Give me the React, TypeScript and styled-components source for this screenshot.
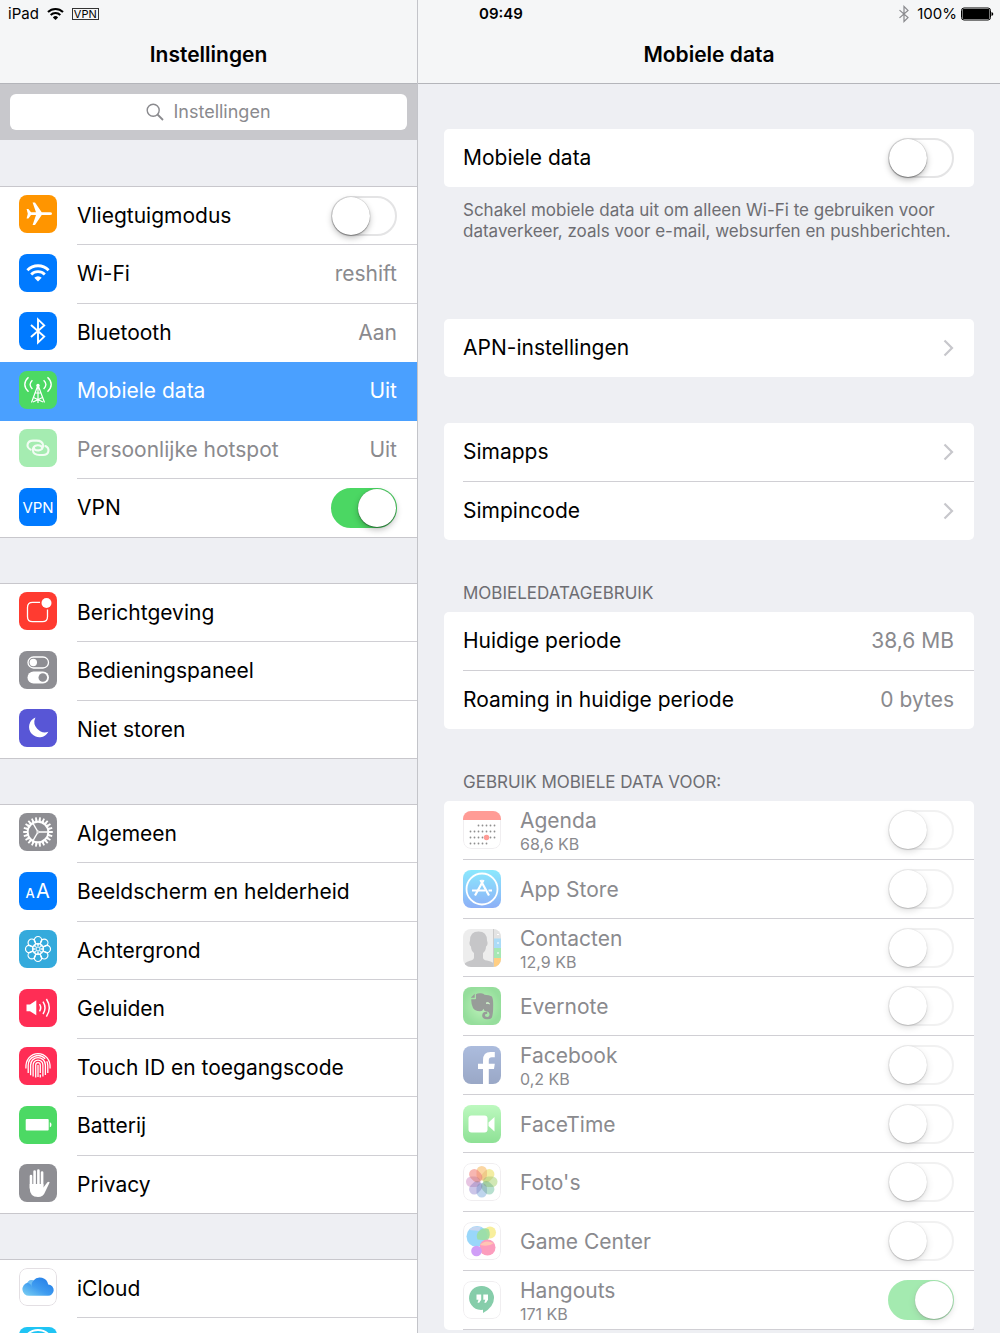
import React, { useState } from "react";
import styled, { createGlobalStyle, css } from "styled-components";

const GlobalStyle = createGlobalStyle`
  *, *::before, *::after { box-sizing: border-box; }
  body {
    margin: 0;
    background: #eeeff3;
    color: #000;
    font-family: Inter, "Liberation Sans", sans-serif;
    font-size: 21px;
    line-height: 26px;
  }
  h1, h2, p, ul { margin: 0; padding: 0; }
  ul { list-style: none; }
`;

/* ---------- layout ---------- */

const Screen = styled.div`
  display: grid;
  grid-template-columns: 418px minmax(0, 1fr);
  grid-template-rows: 28px minmax(0, 1fr);
  height: 100vh;
  overflow: hidden;
`;

const StatusBar = styled.header`
  grid-area: 1 / 1 / 2 / 3;
  z-index: 1;
  display: grid;
  grid-template-columns: 1fr auto 1fr;
  align-items: center;
  padding: 0 6px 0 8px;
  font-size: 15px;
  line-height: 20px;
`;

const StatusGroup = styled.div<{ $end?: boolean }>`
  display: flex;
  align-items: center;
  justify-content: ${(p) => (p.$end ? "flex-end" : "flex-start")};
  gap: ${(p) => (p.$end ? 4 : 8)}px;
`;

const Clock = styled.time`
  font-weight: 600;
`;

const VpnBadge = styled.span`
  border: 1px solid #333;
  padding: 0 1px;
  font-size: 11px;
  line-height: 10px;
`;

const Pane = styled.div`
  grid-row: 1 / 3;
  display: flex;
  flex-direction: column;
  min-width: 0;
  overflow: hidden;
`;

const Sidebar = styled(Pane).attrs({ as: "nav" })`
  grid-column: 1;
  border-right: 1px solid #c3c4c9;
`;

const Detail = styled(Pane).attrs({ as: "main" })`
  grid-column: 2;
`;

const PaneHeader = styled.div`
  flex: none;
  height: 84px;
  padding-top: 42px;
  border-bottom: 1px solid #b4b5ba;
  background: #f5f6f7;
  text-align: center;
`;

const PaneTitle = styled.h1`
  font-size: 21px;
  line-height: 26px;
  font-weight: 600;
`;

/* ---------- search ---------- */

const SearchBar = styled.div`
  flex: none;
  padding: 10px;
  background: #c8c8cc;
`;

const SearchBox = styled.label`
  display: flex;
  align-items: center;
  justify-content: center;
  gap: 9px;
  height: 36px;
  border-radius: 6px;
  background: #fff;
`;

const SearchInput = styled.input`
  field-sizing: content;
  padding: 0;
  border: 0;
  outline: 0;
  background: none;
  font: inherit;
  font-size: 18px;
  line-height: 22px;
  &::placeholder { color: #8a8a8e; opacity: 1; }
`;

/* ---------- controls ---------- */

const Switch = styled.input.attrs({ type: "checkbox", role: "switch" })`
  appearance: none;
  flex: none;
  display: flex;
  justify-content: flex-start;
  width: 66px;
  height: 40px;
  margin: 0;
  padding: 0;
  border: 2px solid #e4e4e5;
  border-radius: 20px;
  background: #fff;
  &::before {
    content: "";
    width: 38px;
    height: 38px;
    margin: -1px;
    border-radius: 50%;
    background: #fff;
    box-shadow: 0 0 1px rgba(0, 0, 0, 0.35), 0 3px 6px rgba(0, 0, 0, 0.25),
      0 1px 1px rgba(0, 0, 0, 0.3);
  }
  &:checked {
    justify-content: flex-end;
    border-color: #4bd763;
    background: #4bd763;
  }
  &:disabled { opacity: 0.5; }
`;

const Value = styled.span`
  flex: none;
  color: #8a8a8e;
`;

const IconTile = styled.svg<{ $dim?: boolean }>`
  flex: none;
  display: block;
  width: 38px;
  height: 38px;
  border-radius: 8px;
  opacity: ${(p) => (p.$dim ? 0.5 : 1)};
`;

/* ---------- sidebar list ---------- */

const Group = styled.ul`
  flex: none;
  margin-top: 45px;
  border-top: 1px solid #c8c7cc;
  background: #fff;
  &:first-of-type { margin-top: 46px; }
`;

const RowBody = styled.div`
  flex: 1;
  min-width: 0;
  display: flex;
  align-items: center;
  justify-content: space-between;
  margin-left: 20px;
  padding-right: 20px;
  border-bottom: 1px solid #d0cfd4;
`;

const Item = styled.li<{ $selected?: boolean; $muted?: boolean }>`
  height: 58px;
  ${IconTile} { margin-top: 8px; }

  &:nth-child(even) {
    height: 59px;
    ${IconTile} { margin-top: 9px; }
  }

  > a, > label {
    display: flex;
    height: 100%;
    padding-left: 19px;
    color: ${(p) => (p.$selected ? "#fff" : p.$muted ? "#8a8a8e" : "#000")};
    background: ${(p) => (p.$selected ? "#4aa0ff" : "none")};
    text-decoration: none;
  }
  ${(p) =>
    p.$selected &&
    css`
      ${RowBody} { border-color: transparent; }
      ${Value} { color: #fff; }
    `}
  &:last-child {
    border-bottom: 1px solid #c8c7cc;
    ${RowBody} { border-bottom: 0; }
  }
  &:has(+ li > [aria-current]) ${RowBody} { border-color: transparent; }
`;

/* ---------- detail list ---------- */

const Content = styled.div`
  padding: 45px 26px 0;
`;

const Card = styled.ul<{ $gap?: number }>`
  margin-top: ${(p) => p.$gap ?? 0}px;
  border-radius: 5px;
  background: #fff;
`;

const CardItem = styled.li`
  height: 59px;
  padding-left: 19px;
  &:nth-child(3n) { height: 58px; }
  &:last-child { height: 58px; }

  > a, > label, > div {
    display: flex;
    align-items: center;
    height: 100%;
    padding-right: 20px;
    border-bottom: 1px solid #d0cfd4;
    color: #000;
    text-decoration: none;
  }
  &:last-child > * { border-bottom: 0; }
`;

const UsageItem = styled(CardItem)`
  &:last-child { height: 59px; }
  &:last-child > * { border-bottom: 1px solid #d0cfd4; }
`;

const Label = styled.span`
  flex: 1;
  min-width: 0;
`;

const AppText = styled.span`
  flex: 1;
  display: flex;
  flex-direction: column;
  margin-left: 19px;
  padding-top: 2px;
  color: #8a8a8e;
`;

const AppUsage = styled.small`
  font-size: 16px;
  line-height: 20px;
`;

const Footnote = styled.p`
  padding: 13px 19px 0;
  color: #6d6d72;
  font-size: 17px;
  line-height: 21px;
`;

const SectionTitle = styled.h2`
  padding: 43px 19px 8px;
  color: #6d6d72;
  font-size: 17px;
  line-height: 21px;
  font-weight: 400;
`;

/* ---------- icons ---------- */

const ring = (n: number) => Array.from({ length: n }, (_, i) => (i * 360) / n);

type TileProps = {
  fill?: string;
  dim?: boolean;
  framed?: boolean;
  children: React.ReactNode;
};

const Tile = ({ fill = "#fff", dim, framed, children }: TileProps) => (
  <IconTile viewBox="0 0 38 38" $dim={dim} aria-hidden="true">
    <rect width="38" height="38" fill={fill} />
    {framed && (
      <rect x=".5" y=".5" width="37" height="37" rx="7.5" fill="none" stroke="#e3dfe3" />
    )}
    {children}
  </IconTile>
);

const WifiShape = () => (
  <>
    <path d="M8.4 16.2a15 15 0 0 1 21.2 0" fill="none" stroke="currentColor" strokeWidth="2.9" />
    <path d="M12.2 20.4a9.6 9.6 0 0 1 13.6 0" fill="none" stroke="currentColor" strokeWidth="2.8" />
    <path d="M15.3 23.8a5.3 5.3 0 0 1 7.4 0L19 27.6Z" fill="currentColor" />
  </>
);

const BluetoothShape = () => (
  <path
    d="M12 13l13.2 11.6L19 30.6V7.4l6.2 6L12 25"
    fill="none"
    stroke="currentColor"
    strokeWidth="1.9"
  />
);

const icons = {
  airplane: (
    <Tile fill="#ff9500">
      <path
        d="M31 17.3h-8.3L16 7.4h-2.4L17 17.3h-5L9.4 14H7.6L8.8 18.7 7.6 23.4h1.8L12 20.1h5L13.6 30H16l6.7-9.9H31q2 0 2-1.4t-2-1.4Z"
        fill="#fff"
      />
    </Tile>
  ),
  wifi: (
    <Tile fill="#007aff">
      <g color="#fff"><WifiShape /></g>
    </Tile>
  ),
  bluetooth: (
    <Tile fill="#007aff">
      <g color="#fff"><BluetoothShape /></g>
    </Tile>
  ),
  cellular: (
    <Tile fill="#4cd964">
      <g fill="none" stroke="#fff" strokeWidth="1.4">
        <path d="M9.5 6.3q-7.4 7 0 14.4M28.5 6.3q7.4 7 0 14.4" />
        <path d="M13.4 9.3q-4.6 4.2 0 8.6M24.6 9.3q4.6 4.2 0 8.6" />
        <path
          d="M19 14 12.5 31.5M19 14l6.500 17.500M19 14v18M16.300 22h5.400M14.500 26.500l9.500 4.500M23.500 26.500l-9.500 4.500"
          strokeWidth="1.2"
        />
      </g>
      <circle cx="19" cy="14.500" r="1.700" fill="#fff" />
    </Tile>
  ),
  hotspot: (
    <Tile fill="#a5ecb1">
      <g fill="none" stroke="#fff" strokeWidth="2.1" strokeLinecap="round" opacity=".85">
        <path d="M11.6 20.6C6.600 18 8 11.600 14 11.600h3.600c8.400 0 8.400 9.400 2 9.800-3.400.2-5-1.400-4.600-3.200" />
        <path
          d="M11.600 20.600C6.600 18 8 11.600 14 11.600h3.600c8.400 0 8.400 9.400 2 9.800-3.400.2-5-1.400-4.600-3.200"
          transform="rotate(180 19 18.800)"
        />
      </g>
    </Tile>
  ),
  vpn: (
    <Tile fill="#007aff">
      <text x="19" y="24.500" textAnchor="middle" fontSize="15" fill="#fff">VPN</text>
    </Tile>
  ),
  notifications: (
    <Tile fill="#ff3b30">
      <path
        d="M21 10.400h-7.500q-5 0-5 5v9.300q0 5 5 5h10q5 0 5-5V17.500"
        fill="none"
        stroke="#fff"
        strokeWidth="1.3"
      />
      <circle cx="27.500" cy="11" r="5" fill="#fff" />
    </Tile>
  ),
  control: (
    <Tile fill="#8e8e93">
      <rect x="9" y="6" width="20.500" height="11" rx="5.500" fill="none" stroke="#fff" strokeWidth="1.3" />
      <circle cx="14.300" cy="11.500" r="3.700" fill="#fff" />
      <rect x="8.500" y="20.500" width="21.500" height="12" rx="6" fill="#fff" />
      <circle cx="23.800" cy="26.500" r="4.300" fill="#8e8e93" />
    </Tile>
  ),
  moon: (
    <Tile fill="#5856d6">
      <path d="M16.400 8.400A10.300 10.300 0 1 0 29.400 22.800 10.600 10.600 0 0 1 16.400 8.400Z" fill="#fff" />
    </Tile>
  ),
  gear: (
    <Tile fill="#8e8e93">
      <g fill="none" stroke="#fff">
        <circle cx="19" cy="19" r="10.300" strokeWidth="1.9" />
        {ring(22).map((a) => (
          <path key={a} d="M31 19h2.800" strokeWidth="1.800" transform={`rotate(${a} 19 19)`} />
        ))}
        {ring(22).map((a) => (
          <path key={a} d="M29 19h2.500" strokeWidth="2.200" transform={`rotate(${a} 19 19)`} />
        ))}
        {ring(3).map((a) => (
          <path key={a} d="M20 19h9" strokeWidth="1.300" transform={`rotate(${a} 19 19)`} />
        ))}
        <circle cx="19" cy="19" r="1.100" strokeWidth="1" />
      </g>
    </Tile>
  ),
  display: (
    <Tile fill="#007aff">
      <text x="6.500" y="25.500" fontSize="13" fontWeight="500" fill="#fff">A</text>
      <text x="17" y="25.500" fontSize="20" fill="#fff">A</text>
    </Tile>
  ),
  wallpaper: (
    <Tile fill="#34aadc">
      <g fill="none" stroke="#fff" strokeWidth="1.2">
        {ring(8).map((a) => (
          <g key={a} transform={`rotate(${a} 19 19)`}>
            <circle cx="19" cy="10.200" r="3.700" />
            <path d="M19 16.800q-2-1.600 0-4.200 2 2.600 0 4.200Z" fill="#fff" stroke="none" opacity=".8" />
          </g>
        ))}
        <circle cx="19" cy="19" r="5.300" strokeWidth="1" />
        <circle cx="19" cy="19" r="2" strokeWidth="1" />
      </g>
    </Tile>
  ),
  sound: (
    <Tile fill="#ff2d55">
      <path d="M7.500 15.500H11l6.300-4.200v15L11 22.200H7.500Z" fill="#fff" />
      <g fill="none" stroke="#fff" strokeWidth="1.5">
        <path d="M20.500 15.200q2.400 3.600 0 7.200" />
        <path d="M24 12.600q4 6.200 0 12.400" />
        <path d="M27.400 10q5.800 8.800 0 17.600" />
      </g>
    </Tile>
  ),
  touch: (
    <Tile fill="#ff2d55">
      <g fill="none" stroke="#fff" strokeWidth="1.3">
        <path d="M19 18v12" />
        <path d="M16.700 30.500V18a2.300 2.300 0 0 1 4.600 0v8M21.300 27.600v3" />
        <path d="M14.100 29.600V18a4.900 4.900 0 0 1 9.800 0v11.600" />
        <path d="M11.600 28.200V18a7.400 7.400 0 0 1 14.800 0v10" />
        <path d="M9.200 26V18.500a9.800 9.800 0 0 1 17-6.700M27.800 14.300q1 2 1 4.200V26" />
        <path d="M6.900 21.500C6.300 12.500 12 6.600 19 6.600S31.700 12.500 31.100 21.500" />
      </g>
    </Tile>
  ),
  battery: (
    <Tile fill="#4cd964">
      <rect x="6.700" y="13" width="23" height="11.500" rx="1" fill="#fff" />
      <path d="M30.800 16.200q1.700.4 1.700 2.500t-1.700 2.500Z" fill="#fff" />
    </Tile>
  ),
  privacy: (
    <Tile fill="#8e8e93">
      <g stroke="#fff" strokeWidth="2.600" strokeLinecap="round">
        <path d="M12 12v12M15.600 7.500V22M19.400 6.500V22M23.100 8.500V22" />
      </g>
      <path
        d="M10.700 20h13.700v3.500l4-5.200q2-1.200 2.200.2l-4.400 9.300q-1.800 5.300-7.200 5.300-8.300 0-8.300-9Z"
        fill="#fff"
      />
    </Tile>
  ),
  icloud: (
    <Tile framed>
      <defs>
        <linearGradient id="cloud" x1="0" y1="1" x2="1" y2="0">
          <stop offset="0" stopColor="#7fd3f2" />
          <stop offset=".45" stopColor="#3f9cf0" />
          <stop offset="1" stopColor="#1f78e6" />
        </linearGradient>
      </defs>
      <path
        d="M10 27.800a6.600 6.600 0 0 1-1.600-13 4.800 4.800 0 0 1 6-2.400 8.600 8.600 0 0 1 14.800 4 5.700 5.700 0 0 1-.4 11.400Z"
        fill="url(#cloud)"
      />
      <path d="M8.400 14.800a4.800 4.800 0 0 1 6-2.400q-3 4-1 8-1-4.800-5-5.600Z" fill="#8fd6f5" opacity=".6" />
    </Tile>
  ),
  store: (
    <Tile fill="#1fc4f4">
      <circle cx="19" cy="18.500" r="15.500" fill="none" stroke="#fff" strokeWidth="1.8" />
    </Tile>
  ),
  calendar: (
    <Tile framed dim>
      <rect width="38" height="9" fill="#ff3b30" />
      {[14.5, 20.5, 26.5, 32.5].map((y, row) =>
        [7.5, 11.5, 15.5, 19.5, 23.5, 27.5, 31.5].map((x, col) =>
          (row === 0 && col < 2) || (row === 3 && col > 4) ? null : (
            <circle key={`${x}-${y}`} cx={x} cy={y} r=".9" fill="#222" />
          ),
        ),
      )}
      <circle cx="23.500" cy="26.500" r="2.700" fill="#ff3b30" />
    </Tile>
  ),
  appstore: (
    <Tile fill="url(#appstore)" dim>
      <defs>
        <linearGradient id="appstore" x1="0" y1="0" x2="0" y2="1">
          <stop offset="0" stopColor="#1ad3fd" />
          <stop offset="1" stopColor="#1d62f0" />
        </linearGradient>
      </defs>
      <g fill="none" stroke="#fff">
        <circle cx="19" cy="19" r="15.500" strokeWidth="1.8" />
        <path d="M20.600 10 12 25.500M17.400 10 26 25.500" strokeWidth="2.2" />
        <path d="M9 20.500h13M25.500 20.500H29" strokeWidth="2.2" />
      </g>
    </Tile>
  ),
  contacts: (
    <Tile fill="#dcdcdc" dim>
      <path
        d="M0 38q1-5 7-6.300 4-1 4-3.300v-4.400Q8 21.500 8 17.500q-2.500-2-1-6Q7 2.500 15.500 2.500T24 11.500q1.500 4-1 6 0 4-3 6.500v4.400q0 2.500 4 3.200T30.500 34v4Z"
        fill="#8f8f93"
      />
      <rect x="30" width="8" height="38" fill="#c9c9c9" />
      <rect x="31" y="9.500" width="7" height="9.500" fill="#5ab8f0" />
      <rect x="31" y="19" width="7" height="10" fill="#4fd06a" />
      <rect x="31" y="29" width="7" height="9" fill="#ff9f0a" />
      <path d="M34 5.500h2M34 14h2M34 24h2" stroke="#fff" />
      <path d="M30.500 0v38" stroke="#999" />
    </Tile>
  ),
  evernote: (
    <Tile fill="url(#evernote)" dim>
      <defs>
        <radialGradient id="evernote">
          <stop offset="0" stopColor="#7fe878" />
          <stop offset="1" stopColor="#2fbf3c" />
        </radialGradient>
      </defs>
      <path
        d="M8.300 12.300h3.900q.8 0 .8-.8V7.300q1.500-1.300 5-1 2.800.2 3.600 1.500 4.500.3 6.900 1.500 1.700 1.200 1.700 8.700 0 10-1.500 12.800-1.200 1.700-5 1.500-4.800-.3-4.500-4.300.5-3.200 4-3.200h1v2.200q-2.200-.3-2.300 1.300 0 1.700 2.300 1.700 2.600.2 2.300-2.700-.4-3-3.500-3-2 0-2.500-2.500-.8 2.500-3.500 2.500-5.500-.5-7-3.300-2-4-1.700-8.700Z"
        fill="#333b36"
      />
      <path d="M7.800 10.700 11.700 6.800v3.900Z" fill="#333b36" />
      <path d="M23 16.200q2-1.700 3.600.6-1.800-.6-3.600-.6Z" fill="#9ddf95" stroke="#9ddf95" />
    </Tile>
  ),
  facebook: (
    <Tile fill="url(#facebook)" dim>
      <defs>
        <linearGradient id="facebook" x1="0" y1="0" x2="0" y2="1">
          <stop offset="0" stopColor="#5b7bbd" />
          <stop offset="1" stopColor="#37538f" />
        </linearGradient>
      </defs>
      <path d="M20 38V23h-5v-5.300h5v-3.500Q20 6 27.500 6h4.300v5.300h-3q-3 0-3 3v3.400h6L31 23h-5.200v15Z" fill="#fff" />
    </Tile>
  ),
  facetime: (
    <Tile fill="url(#facetime)" dim>
      <defs>
        <linearGradient id="facetime" x1="0" y1="0" x2="0" y2="1">
          <stop offset="0" stopColor="#7df481" />
          <stop offset="1" stopColor="#1fc42e" />
        </linearGradient>
      </defs>
      <rect x="5.500" y="10.500" width="19" height="17" rx="3" fill="#fff" />
      <path d="M25.500 17.500 31.500 12v14.500l-6-5.500Z" fill="#fff" />
    </Tile>
  ),
  photos: (
    <Tile framed dim>
      {["#f79a1b", "#e2d31a", "#8fc84a", "#4fb48a", "#5f97d3", "#7f6fc8", "#c56fb8", "#ee4b3e"].map(
        (color, i) => (
          <rect
            key={color}
            x="13.500"
            y="3"
            width="10.500"
            height="14.500"
            rx="5.250"
            fill={color}
            opacity=".8"
            style={{ mixBlendMode: "multiply" }}
            transform={`rotate(${i * 45} 18.75 18.75)`}
          />
        ),
      )}
    </Tile>
  ),
  gamecenter: (
    <Tile framed dim>
      <circle cx="27" cy="10.500" r="6" fill="#f3e03c" />
      <circle cx="14" cy="14.500" r="10.500" fill="#35b0f7" />
      <path d="M16 9q4-4 9.500-2 3 6-1 11.500l-10-1q-2-5 1.500-8.500Z" fill="#3cc046" opacity=".9" />
      <path d="M6 8q4-5 12-3l-2 4Z" fill="#b5b0dd" opacity=".7" />
      <circle cx="24.500" cy="25.500" r="8" fill="#fb3d7e" />
      <path d="M17 23q5-6 14-2-5 4-14 2Z" fill="#ff8d6e" />
      <circle cx="13.500" cy="29" r="5.300" fill="#a33ff0" />
    </Tile>
  ),
  hangouts: (
    <Tile framed dim>
      <path d="M19 5a12 12 0 0 1 12 12q0 9-11 15v-3.200A12 12 0 1 1 19 5Z" fill="#0f9d58" />
      <path d="M13.500 13.500h4.700v5.200l-2 3h-1.700l1-3h-2ZM20.300 13.500H25v5.200l-2 3h-1.700l1-3h-2Z" fill="#fff" />
    </Tile>
  ),
};

type IconName = keyof typeof icons;

const Chevron = () => (
  <svg width="11" height="18" viewBox="0 0 11 18" aria-hidden="true">
    <path d="M1.500 1.500 9 9l-7.500 7.500" fill="none" stroke="#c7c7cc" strokeWidth="2.2" />
  </svg>
);

/* ---------- data ---------- */

type Setting = {
  icon: IconName;
  label: string;
  value?: string;
  toggle?: boolean;
  selected?: boolean;
  muted?: boolean;
};

const settingGroups: Setting[][] = [
  [
    { icon: "airplane", label: "Vliegtuigmodus", toggle: false },
    { icon: "wifi", label: "Wi-Fi", value: "reshift" },
    { icon: "bluetooth", label: "Bluetooth", value: "Aan" },
    { icon: "cellular", label: "Mobiele data", value: "Uit", selected: true },
    { icon: "hotspot", label: "Persoonlijke hotspot", value: "Uit", muted: true },
    { icon: "vpn", label: "VPN", toggle: true },
  ],
  [
    { icon: "notifications", label: "Berichtgeving" },
    { icon: "control", label: "Bedieningspaneel" },
    { icon: "moon", label: "Niet storen" },
  ],
  [
    { icon: "gear", label: "Algemeen" },
    { icon: "display", label: "Beeldscherm en helderheid" },
    { icon: "wallpaper", label: "Achtergrond" },
    { icon: "sound", label: "Geluiden" },
    { icon: "touch", label: "Touch ID en toegangscode" },
    { icon: "battery", label: "Batterij" },
    { icon: "privacy", label: "Privacy" },
  ],
  [
    { icon: "icloud", label: "iCloud" },
    { icon: "store", label: "" },
  ],
];

type AppEntry = { icon: IconName; name: string; usage?: string; on?: boolean };

const apps: AppEntry[] = [
  { icon: "calendar", name: "Agenda", usage: "68,6 KB" },
  { icon: "appstore", name: "App Store" },
  { icon: "contacts", name: "Contacten", usage: "12,9 KB" },
  { icon: "evernote", name: "Evernote" },
  { icon: "facebook", name: "Facebook", usage: "0,2 KB" },
  { icon: "facetime", name: "FaceTime" },
  { icon: "photos", name: "Foto's" },
  { icon: "gamecenter", name: "Game Center" },
  { icon: "hangouts", name: "Hangouts", usage: "171 KB", on: true },
];

/* ---------- components ---------- */

const Toggle = ({ id, initial }: { id: string; initial: boolean }) => {
  const [on, setOn] = useState(initial);
  return <Switch id={id} checked={on} onChange={(e) => setOn(e.target.checked)} />;
};

const SettingRow = ({ icon, label, value, toggle, selected, muted }: Setting) => {
  const body = (
    <>
      {icons[icon]}
      <RowBody>
        <span>{label}</span>
        {value && <Value>{value}</Value>}
        {toggle !== undefined && <Toggle id={`setting-${icon}`} initial={toggle} />}
      </RowBody>
    </>
  );
  return (
    <Item $selected={selected} $muted={muted}>
      {toggle !== undefined ? (
        <label htmlFor={`setting-${icon}`}>{body}</label>
      ) : (
        <a href={`#${icon}`} aria-current={selected ? "page" : undefined}>{body}</a>
      )}
    </Item>
  );
};

const LinkRow = ({ label, href }: { label: string; href: string }) => (
  <CardItem>
    <a href={href}>
      <Label>{label}</Label>
      <Chevron />
    </a>
  </CardItem>
);

const ValueRow = ({ label, value }: { label: string; value: string }) => (
  <CardItem>
    <div>
      <Label>{label}</Label>
      <Value>{value}</Value>
    </div>
  </CardItem>
);

const AppRow = ({ icon, name, usage, on = false }: AppEntry) => (
  <UsageItem>
    <label htmlFor={`app-${icon}`}>
      {icons[icon]}
      <AppText>
        {name}
        {usage && <AppUsage>{usage}</AppUsage>}
      </AppText>
      <Switch id={`app-${icon}`} defaultChecked={on} disabled />
    </label>
  </UsageItem>
);

export default function App() {
  return (
    <>
      <GlobalStyle />
      <Screen>
        <StatusBar>
          <StatusGroup>
            <span>iPad</span>
            <svg width="17" height="14" viewBox="7 9.500 24 19" aria-hidden="true">
              <WifiShape />
            </svg>
            <VpnBadge>VPN</VpnBadge>
          </StatusGroup>
          <Clock>09:49</Clock>
          <StatusGroup $end>
            <svg width="18" height="18" viewBox="5 5 28 28" color="#8a8a8e" aria-hidden="true">
              <BluetoothShape />
            </svg>
            <span>100%</span>
            <svg width="33" height="14" viewBox="0 0 33 14" aria-hidden="true">
              <rect x=".5" y="1" width="29" height="12" rx="2.500" fill="none" stroke="#000" />
              <rect x="1.500" y="2" width="27" height="10" rx="1" />
              <path d="M30.500 5q1.800.4 1.800 2t-1.800 2Z" />
            </svg>
          </StatusGroup>
        </StatusBar>

        <Sidebar>
          <PaneHeader>
            <PaneTitle>Instellingen</PaneTitle>
          </PaneHeader>
          <SearchBar>
            <SearchBox>
              <svg width="18" height="18" viewBox="0 0 18 18" aria-hidden="true">
                <circle cx="7.200" cy="7.200" r="6" fill="none" stroke="#8a8a8e" strokeWidth="1.4" />
                <path d="m11.500 11.500 5.500 5.500" stroke="#8a8a8e" strokeWidth="1.8" />
              </svg>
              <SearchInput type="text" placeholder="Instellingen" aria-label="Instellingen" />
            </SearchBox>
          </SearchBar>
          {settingGroups.map((group) => (
            <Group key={group[0].icon}>
              {group.map((setting) => (
                <SettingRow key={setting.icon} {...setting} />
              ))}
            </Group>
          ))}
        </Sidebar>

        <Detail>
          <PaneHeader>
            <PaneTitle as="h2">Mobiele data</PaneTitle>
          </PaneHeader>
          <Content>
            <Card>
              <CardItem>
                <label htmlFor="mobile-data">
                  <Label>Mobiele data</Label>
                  <Toggle id="mobile-data" initial={false} />
                </label>
              </CardItem>
            </Card>
            <Footnote>
              Schakel mobiele data uit om alleen Wi-Fi te gebruiken voor dataverkeer, zoals voor
              e-mail, websurfen en pushberichten.
            </Footnote>
            <Card $gap={77}>
              <LinkRow label="APN-instellingen" href="#apn" />
            </Card>
            <Card $gap={46}>
              <LinkRow label="Simapps" href="#simapps" />
              <LinkRow label="Simpincode" href="#simpincode" />
            </Card>
            <SectionTitle>MOBIELEDATAGEBRUIK</SectionTitle>
            <Card>
              <ValueRow label="Huidige periode" value="38,6 MB" />
              <ValueRow label="Roaming in huidige periode" value="0 bytes" />
            </Card>
            <SectionTitle>GEBRUIK MOBIELE DATA VOOR:</SectionTitle>
            <Card>
              {apps.map((app) => (
                <AppRow key={app.icon} {...app} />
              ))}
            </Card>
          </Content>
        </Detail>
      </Screen>
    </>
  );
}
